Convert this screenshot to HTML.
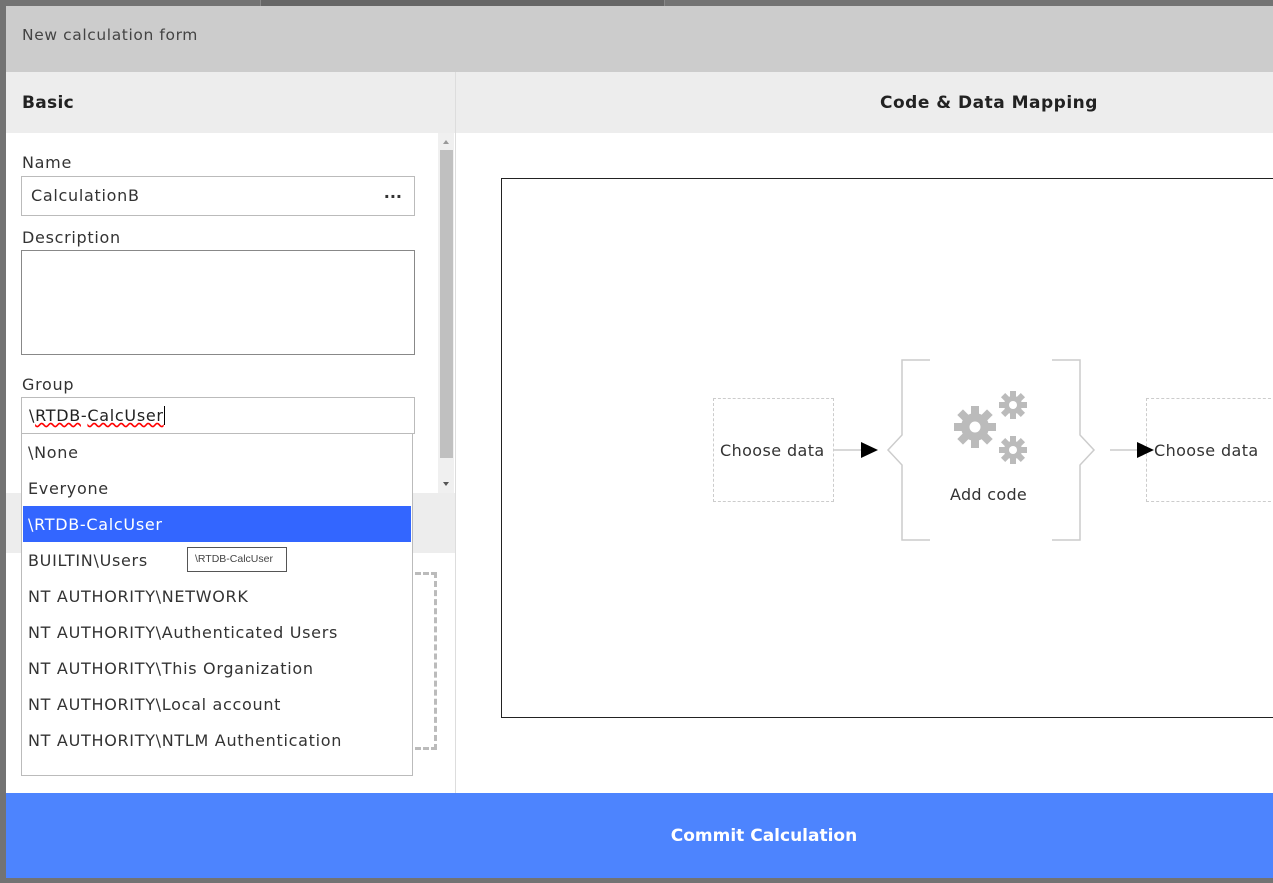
<!DOCTYPE html>
<html><head><meta charset="utf-8"><style>
*{box-sizing:border-box;margin:0;padding:0}
body{width:1273px;height:883px;background:#737373;position:relative;overflow:hidden;font-family:"DejaVu Sans","Liberation Sans",sans-serif;color:#333;font-size:16px;letter-spacing:0.7px}
.a{position:absolute}
.item{position:absolute;left:6px;height:36px;line-height:36px;color:#333;width:388px;white-space:nowrap}
</style></head><body>
<div class="a" style="left:260px;top:0;width:405px;height:6px;background:#666;border-left:1px solid #888;border-right:1px solid #888"></div>
<div class="a" style="left:6px;top:6px;width:1267px;height:872px;background:#fff"></div>
<div class="a" style="left:6px;top:6px;width:1267px;height:66px;background:#cccccc"></div>
<div class="a" style="left:22px;top:26px;font-size:15.5px;color:#444;letter-spacing:0.6px">New calculation form</div>
<div class="a" style="left:6px;top:72px;width:1267px;height:61px;background:#ededed"></div>
<div class="a" style="left:455px;top:72px;width:1px;height:721px;background:#ddd"></div>
<div class="a" style="left:22px;top:93px;font-size:17px;font-weight:bold;color:#222;letter-spacing:0.3px">Basic</div>
<div class="a" style="left:880px;top:93px;font-size:17px;font-weight:bold;color:#222;white-space:nowrap;letter-spacing:0.5px">Code &amp; Data Mapping</div>
<div class="a" style="left:438px;top:133px;width:16px;height:360px;background:#f0f0f0"></div>
<div class="a" style="left:440px;top:150px;width:13px;height:308px;background:#c0c0c0"></div>
<div class="a" style="left:443px;top:140px;border-left:3.5px solid transparent;border-right:3.5px solid transparent;border-bottom:4px solid #999"></div>
<div class="a" style="left:443px;top:482px;border-left:3.5px solid transparent;border-right:3.5px solid transparent;border-top:4px solid #555"></div>
<div class="a" style="left:22px;top:153px">Name</div>
<div class="a" style="left:21px;top:176px;width:394px;height:40px;border:1px solid #bbb;padding:9px">CalculationB<span style="position:absolute;right:12px;top:6px;font-weight:bold;letter-spacing:0">...</span></div>
<div class="a" style="left:22px;top:228px">Description</div>
<div class="a" style="left:21px;top:250px;width:394px;height:105px;border:1px solid #888"></div>
<div class="a" style="left:22px;top:375px">Group</div>
<div class="a" style="left:21px;top:397px;width:394px;height:37px;border:1px solid #bbb;padding:8px 7px;color:#222;white-space:nowrap">\<span style="text-decoration:underline wavy red">RTDB</span>-<span style="text-decoration:underline wavy red">CalcUser</span><span style="border-left:1px solid #000;margin-left:0"></span></div>
<div class="a" style="left:6px;top:493px;width:449px;height:60px;background:#ededed"></div>
<div class="a" style="left:415px;top:572px;width:22px;height:178px;border:3px dashed #bbb;border-left:none"></div>
<div class="a" style="left:21px;top:433px;width:392px;height:343px;background:#fff;border:1px solid #bbb">
<div class="item" style="top:1px">\None</div>
<div class="item" style="top:37px">Everyone</div>
<div class="item" style="top:72px;left:1px;width:388px;padding-left:5px;background:#3366ff;color:#fff;line-height:38px">\RTDB-CalcUser</div>
<div class="item" style="top:109px">BUILTIN\Users</div>
<div class="item" style="top:145px">NT AUTHORITY\NETWORK</div>
<div class="item" style="top:181px">NT AUTHORITY\Authenticated Users</div>
<div class="item" style="top:217px">NT AUTHORITY\This Organization</div>
<div class="item" style="top:253px">NT AUTHORITY\Local account</div>
<div class="item" style="top:289px">NT AUTHORITY\NTLM Authentication</div>
</div>
<div class="a" style="left:187px;top:547px;width:100px;height:25px;border:1px solid #555;background:#fff;font-size:10.5px;line-height:23px;padding-left:7px;color:#444;white-space:nowrap;letter-spacing:0;font-family:'Liberation Sans',sans-serif">\RTDB-CalcUser</div>
<div class="a" style="left:501px;top:178px;width:780px;height:540px;border:1px solid #222"></div>
<div class="a" style="left:713px;top:398px;width:121px;height:104px;border:1px dashed #ccc"></div>
<div class="a" style="left:720px;top:441px;white-space:nowrap;letter-spacing:0.4px">Choose data</div>
<div class="a" style="left:1146px;top:398px;width:130px;height:104px;border:1px dashed #ccc"></div>
<div class="a" style="left:1154px;top:441px;white-space:nowrap;letter-spacing:0.4px">Choose data</div>
<svg class="a" style="left:820px;top:355px" width="360" height="190">
<line x1="14" y1="95" x2="45" y2="95" stroke="#ccc" stroke-width="1.5"/>
<polygon points="41,87 58,95 41,103" fill="#000"/>
<polyline points="110,5 82,5 82,80 68,95 82,110 82,185 110,185" fill="none" stroke="#ccc" stroke-width="1.5"/>
<polyline points="232,5 260,5 260,80 274,95 260,110 260,185 232,185" fill="none" stroke="#ccc" stroke-width="1.5"/>
<line x1="290" y1="95" x2="330" y2="95" stroke="#ccc" stroke-width="1.5"/>
<polygon points="317,87 334,95 317,103" fill="#000"/>
<g fill="#bbb">
<circle cx="155" cy="72" r="14"/>
<g transform="translate(155,72)"><rect x="-4" y="-21" width="8" height="42"/><rect x="-4" y="-21" width="8" height="42" transform="rotate(45)"/><rect x="-4" y="-21" width="8" height="42" transform="rotate(90)"/><rect x="-4" y="-21" width="8" height="42" transform="rotate(135)"/></g>
<circle cx="193" cy="50" r="9"/>
<g transform="translate(193,50)"><rect x="-3" y="-14" width="6" height="28"/><rect x="-3" y="-14" width="6" height="28" transform="rotate(45)"/><rect x="-3" y="-14" width="6" height="28" transform="rotate(90)"/><rect x="-3" y="-14" width="6" height="28" transform="rotate(135)"/></g>
<circle cx="193" cy="95" r="9"/>
<g transform="translate(193,95)"><rect x="-3" y="-14" width="6" height="28"/><rect x="-3" y="-14" width="6" height="28" transform="rotate(45)"/><rect x="-3" y="-14" width="6" height="28" transform="rotate(90)"/><rect x="-3" y="-14" width="6" height="28" transform="rotate(135)"/></g>
</g>
<g fill="#fff"><circle cx="155" cy="72" r="5.5"/><circle cx="193" cy="50" r="4"/><circle cx="193" cy="95" r="4"/></g>
</svg>
<div class="a" style="left:950px;top:485px;white-space:nowrap;letter-spacing:0.3px">Add code</div>
<div class="a" style="left:6px;top:793px;width:1267px;height:85px;background:#4d84fe"></div>
<div class="a" style="left:664px;top:794px;width:200px;height:85px;color:#fff;font-size:17px;font-weight:bold;text-align:center;line-height:85px;white-space:nowrap;letter-spacing:0">Commit Calculation</div>
</body></html>
